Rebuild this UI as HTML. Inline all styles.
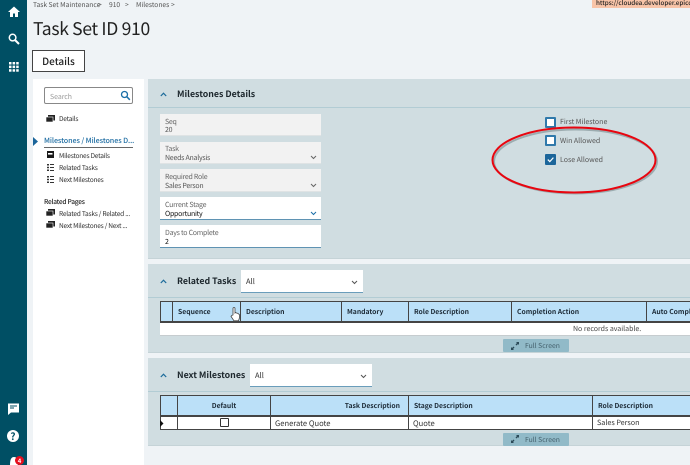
<!DOCTYPE html>
<html><head><meta charset="utf-8">
<style>
html,body{margin:0;padding:0}
body{width:690px;height:465px;overflow:hidden;position:relative;background:#eff3f6;font-family:"Noto Sans CJK SC","Liberation Sans",sans-serif;color:#333;text-rendering:geometricPrecision}
div,span{position:absolute;box-sizing:border-box}
.t{white-space:nowrap;line-height:12px;font-size:7px;color:#444}
.bc{top:-2px;font-size:6.7px;color:#555}
.s{font-size:6.6px;letter-spacing:-.25px;color:#333}
.sec{left:148px;width:542px;background:#d0dde1;border-bottom:1px solid #c5d3d7}
.hl{left:148px;width:542px;height:1px;background:#b2ccd4}
.h{font-size:8.8px;font-weight:700;color:#1c262c;white-space:nowrap;line-height:14px}
.f{left:160px;width:161px;background:#f2f2f2;border-bottom:1px solid #dfe3e4}
.f.w{background:#fff;border-bottom:1px solid #5f93b3}
.l{left:5px;top:2px;font-size:7px;letter-spacing:-.25px;line-height:12px;color:#666;white-space:nowrap}
.v{left:5px;top:11px;font-size:7px;letter-spacing:-.25px;line-height:12px;color:#555;white-space:nowrap}
.w .v{color:#111}
.th{background:#bbe0f8;border:1px solid #444;border-width:1px 1px 2px 0;font-size:6.8px;font-weight:700;color:#1c2a36;line-height:19px;white-space:nowrap;overflow:hidden;padding-left:5px}
.td{background:#fff;border-bottom:1px solid #444;border-right:1px solid #444;font-size:7px;color:#333;line-height:13px;white-space:nowrap;overflow:hidden;padding-left:4px}
.dd{background:#fff;border-bottom:1px solid #6a9dbb;height:23px;font-size:7.5px;color:#333;line-height:23px;padding-left:5px}
.fs{left:503px;width:66px;height:13px;background:#91bac8;font-size:6.8px;color:#44606c;line-height:13px;padding-left:22px;white-space:nowrap;border-radius:1px}
.cb{width:11px;height:11px;background:#fff;border:2px solid #3079ab;border-radius:1px}
svg{position:absolute;overflow:visible}
</style></head><body>

<div style="left:0;top:0;width:27px;height:465px;background:#004f64"></div>
<svg style="left:7px;top:5px" width="14" height="14" viewBox="0 0 14 14"><path d="M7 1.500L1 7h2v5h3V8.500h2V12h3V7h2z" fill="#fff"/></svg>
<svg style="left:7px;top:32px" width="14" height="14" viewBox="0 0 14 14"><circle cx="5.600" cy="5.600" r="3.300" fill="none" stroke="#fff" stroke-width="1.500"/><path d="M8 8l4 4" stroke="#fff" stroke-width="2"/></svg>
<svg style="left:9px;top:62px" width="10" height="10" viewBox="0 0 10 10" fill="#fff"><rect x="0" y="0" width="2.500" height="2.500"/><rect x="3.600" y="0" width="2.500" height="2.500"/><rect x="7.200" y="0" width="2.500" height="2.500"/><rect x="0" y="3.600" width="2.500" height="2.500"/><rect x="3.600" y="3.600" width="2.500" height="2.500"/><rect x="7.200" y="3.600" width="2.500" height="2.500"/><rect x="0" y="7.200" width="2.500" height="2.500"/><rect x="3.600" y="7.200" width="2.500" height="2.500"/><rect x="7.200" y="7.200" width="2.500" height="2.500"/></svg>
<svg style="left:7px;top:403px" width="13" height="13" viewBox="0 0 13 13"><path d="M1 .5h11v9H4l-3 2.500z" fill="#fff"/><path d="M3 3h7M3 5h4" stroke="#004f64" stroke-width="1"/></svg>
<div style="left:7px;top:430px;width:12px;height:12px;border-radius:50%;background:#fff;color:#004f64;font-size:10px;font-weight:700;line-height:12px;text-align:center">?</div>
<svg style="left:8px;top:457px" width="12" height="8" viewBox="0 0 12 8"><path d="M6 0c3 0 4 3 4 8H2c0-5 1-8 4-8z" fill="#fff"/></svg>
<div style="left:15px;top:456px;width:9px;height:9px;border-radius:50%;background:#e5101f;color:#fff;font-size:6px;font-weight:700;line-height:9px;text-align:center">4</div>

<div class="t bc" style="left:33px">Task Set Maintenance</div>
<div class="t bc" style="left:98px">&gt;</div>
<div class="t bc" style="left:109px">910</div>
<div class="t bc" style="left:125px">&gt;</div>
<div class="t bc" style="left:136px">Milestones</div>
<div class="t bc" style="left:171px">&gt;</div>
<div style="left:592px;top:0;width:98px;height:8px;background:#f8c4a8;overflow:hidden"><div class="t" style="left:4px;top:-3px;font-size:6.3px;font-weight:500;color:#222">https://cloudea.developer.epicor.com</div></div>

<div style="left:33px;top:15px;font-size:17.5px;letter-spacing:-.3px;line-height:28px;color:#222;white-space:nowrap">Task Set ID 910</div>
<div style="left:32px;top:50px;width:53px;height:22px;background:#fff;border:1px solid #444;border-bottom-width:1.500px;font-size:10px;font-weight:500;line-height:20px;text-align:center;color:#222">Details</div>

<div style="left:33px;top:79px;width:111px;height:386px;background:#fff"></div>
<div style="left:44px;top:87px;width:89px;height:17px;background:#fff;border:1px solid #888;border-radius:2px"></div>
<div class="t" style="left:50px;top:90px;font-size:6.9px;color:#999">Search</div>
<svg style="left:120px;top:90px" width="11" height="11" viewBox="0 0 11 11"><circle cx="4.500" cy="4.500" r="3" fill="none" stroke="#1b6fa8" stroke-width="1.300"/><path d="M6.800 6.800l3 3" stroke="#1b6fa8" stroke-width="1.500"/></svg>

<svg style="left:46px;top:115px" width="9" height="8" viewBox="0 0 9 8"><rect x="2" y="0" width="7" height="5.500" fill="#222"/><rect x="0" y="2" width="7" height="5" fill="#222" stroke="#fff" stroke-width=".6"/></svg>
<div class="t s" style="left:59px;top:112px">Details</div>
<svg style="left:33px;top:137px" width="5" height="9" viewBox="0 0 5 9"><path d="M0 0l5 4.500L0 9z" fill="#1b659a"/></svg>
<div class="t" style="left:44px;top:135px;font-size:7.2px;letter-spacing:-.08px;font-weight:500;color:#1d6ca2">Milestones / Milestones D...</div>
<div style="left:44px;top:147px;width:89px;height:1px;background:#666"></div>
<svg style="left:47px;top:151px" width="7" height="7" viewBox="0 0 7 7"><rect width="7" height="7" fill="#1a1a1a"/><rect x="1" y="2" width="4.500" height="1.600" fill="#fff"/></svg>
<div class="t s" style="left:59px;top:149px">Milestones Details</div>
<svg style="left:47px;top:164px" width="7" height="7" viewBox="0 0 7 7" fill="#333"><path d="M0 0h2v1.500H0zM3 0h4v1H3zM0 2.700h2v1.500H0zM3 3h4v1H3zM0 5.500h2V7H0zM3 6h4v1H3z"/></svg>
<div class="t s" style="left:59px;top:161px">Related Tasks</div>
<svg style="left:47px;top:176px" width="7" height="7" viewBox="0 0 7 7" fill="#333"><path d="M0 0h2v1.500H0zM3 0h4v1H3zM0 2.700h2v1.500H0zM3 3h4v1H3zM0 5.500h2V7H0zM3 6h4v1H3z"/></svg>
<div class="t s" style="left:59px;top:173px">Next Milestones</div>
<div class="t s" style="left:44px;top:195px;font-weight:500;color:#222">Related Pages</div>
<svg style="left:46px;top:209px" width="9" height="8" viewBox="0 0 9 8"><rect x="2" y="0" width="7" height="5.500" fill="#222"/><rect x="0" y="2" width="7" height="5" fill="#222" stroke="#fff" stroke-width=".6"/></svg>
<div class="t s" style="left:59px;top:207px">Related Tasks / Related ...</div>
<svg style="left:46px;top:221px" width="9" height="8" viewBox="0 0 9 8"><rect x="2" y="0" width="7" height="5.500" fill="#222"/><rect x="0" y="2" width="7" height="5" fill="#222" stroke="#fff" stroke-width=".6"/></svg>
<div class="t s" style="left:59px;top:219px">Next Milestones / Next ...</div>

<!-- Section 1 -->
<div class="sec" style="top:79px;height:180px"></div>
<div class="hl" style="top:107px"></div>
<svg style="left:160px;top:92px" width="7" height="5" viewBox="0 0 7 5"><path d="M.8 4L3.500 1.200 6.200 4" fill="none" stroke="#1b6a9a" stroke-width="1.200"/></svg>
<div class="h" style="left:177px;top:87px">Milestones Details</div>

<div class="f" style="top:114px;height:22px"><div class="l">Seq</div><div class="v" style="top:10px">20</div></div>
<div class="f" style="top:142px;height:22px"><div class="l" style="top:1px">Task</div><div class="v" style="top:10px">Needs Analysis</div></div>
<div class="f" style="top:169px;height:23px"><div class="l">Required Role</div><div class="v">Sales Person</div></div>
<div class="f w" style="top:197px;height:23px"><div class="l">Current Stage</div><div class="v">Opportunity</div></div>
<div class="f w" style="top:225px;height:23px"><div class="l">Days to Complete</div><div class="v">2</div></div>
<svg style="left:310px;top:155px" width="7" height="5" viewBox="0 0 7 5"><path d="M1 1l2.500 2.500L6 1" fill="none" stroke="#666" stroke-width="1"/></svg>
<svg style="left:310px;top:183px" width="7" height="5" viewBox="0 0 7 5"><path d="M1 1l2.500 2.500L6 1" fill="none" stroke="#666" stroke-width="1"/></svg>
<svg style="left:310px;top:211px" width="7" height="5" viewBox="0 0 7 5"><path d="M1 1l2.500 2.500L6 1" fill="none" stroke="#1b6fa8" stroke-width="1"/></svg>

<div class="cb" style="left:545px;top:117px"></div>
<div class="t" style="left:560px;top:116px;color:#555">First Milestone</div>
<div class="cb" style="left:545px;top:135px"></div>
<div class="t" style="left:560px;top:135px;color:#555">Win Allowed</div>
<div class="cb" style="left:545px;top:154px;background:#1b659a;border-color:#1b659a"></div>
<svg style="left:545px;top:154px" width="11" height="11" viewBox="0 0 11 11"><path d="M2.800 5.600l2 2 3.600-4" fill="none" stroke="#fff" stroke-width="1.200"/></svg>
<div class="t" style="left:560px;top:154px;color:#555">Lose Allowed</div>

<svg style="left:0;top:0" width="690" height="465"><ellipse cx="574" cy="160" rx="81.500" ry="32" fill="none" stroke="#7a8c90" stroke-width="2" opacity=".6" transform="translate(1.500 1.500)"/><ellipse cx="574" cy="160" rx="81.500" ry="32.500" fill="none" stroke="#e8050f" stroke-width="2"/></svg>

<!-- Section 2 -->
<div class="sec" style="top:264px;height:89px"></div>
<div class="hl" style="top:297px"></div>
<svg style="left:160px;top:279px" width="7" height="5" viewBox="0 0 7 5"><path d="M.8 4L3.500 1.200 6.200 4" fill="none" stroke="#1b6a9a" stroke-width="1.200"/></svg>
<div class="h" style="left:177px;top:274px">Related Tasks</div>
<div class="dd" style="left:241px;top:270px;width:122px">All</div>
<svg style="left:351px;top:280px" width="7" height="5" viewBox="0 0 7 5"><path d="M1 1l2.500 2.500L6 1" fill="none" stroke="#555" stroke-width="1"/></svg>

<div class="th" style="left:160px;top:301px;width:13px;height:22px;border-left-width:1px"></div>
<div class="th" style="left:173px;top:301px;width:68px;height:22px">Sequence</div>
<div class="th" style="left:241px;top:301px;width:101px;height:22px">Description</div>
<div class="th" style="left:342px;top:301px;width:67px;height:22px">Mandatory</div>
<div class="th" style="left:409px;top:301px;width:103px;height:22px">Role Description</div>
<div class="th" style="left:512px;top:301px;width:135px;height:22px">Completion Action</div>
<div class="th" style="left:647px;top:301px;width:43px;height:22px;border-right:0">Auto Completion</div>
<div style="left:160px;top:323px;width:530px;height:13px;background:#fff;border-bottom:1px solid #c6cccf"></div>
<div class="t" style="left:573px;top:323px;color:#444">No records available.</div>
<svg style="left:230px;top:306px" width="11" height="17" viewBox="0 0 11 17"><path d="M3 9V2.500a1 1 0 012 0V7l.5-.5 1 .5 1 .3 1 .5 1 1v3l-1 3H4l-3-4.500 1-1z" fill="#fff" stroke="#444" stroke-width=".8"/></svg>
<div class="fs" style="top:339px">Full Screen</div>
<svg style="left:511px;top:342px" width="8" height="8" viewBox="0 0 8 8"><path d="M0 8V5l1 1 1.500-1.500 1 1L2 7l1 1zM8 0v3L7 2 5.500 3.500l-1-1L6 1 5 0z" fill="#2b4a58"/></svg>

<!-- Section 3 -->
<div class="sec" style="top:358px;height:88px"></div>
<div class="hl" style="top:391px"></div>
<svg style="left:160px;top:373px" width="7" height="5" viewBox="0 0 7 5"><path d="M.8 4L3.500 1.200 6.200 4" fill="none" stroke="#1b6a9a" stroke-width="1.200"/></svg>
<div class="h" style="left:177px;top:368px">Next Milestones</div>
<div class="dd" style="left:250px;top:364px;width:122px">All</div>
<svg style="left:360px;top:374px" width="7" height="5" viewBox="0 0 7 5"><path d="M1 1l2.500 2.500L6 1" fill="none" stroke="#555" stroke-width="1"/></svg>

<div class="th" style="left:160px;top:395px;width:18px;height:22px;border-left-width:1px"></div>
<div class="th" style="left:178px;top:395px;width:93px;height:22px;text-align:center;padding:0">Default</div>
<div class="th" style="left:271px;top:395px;width:138px;height:22px;text-align:right;padding:0 8px 0 0">Task Description</div>
<div class="th" style="left:409px;top:395px;width:184px;height:22px">Stage Description</div>
<div class="th" style="left:593px;top:395px;width:97px;height:22px;border-right:0">Role Description</div>

<div class="td" style="left:160px;top:417px;width:18px;height:13px;background:#fff;border-left:1px solid #444"></div>
<svg style="left:160px;top:420px" width="4" height="7" viewBox="0 0 4 7"><path d="M0 0l3.500 3.500L0 7z" fill="#111"/></svg>
<div class="td" style="left:178px;top:417px;width:93px;height:13px"></div>
<div style="left:220px;top:418px;width:9px;height:9px;border:1px solid #333;border-radius:1px;background:#fff"></div>
<div class="td" style="left:271px;top:417px;width:138px;height:13px;font-size:7.6px">Generate Quote</div>
<div class="td" style="left:409px;top:417px;width:184px;height:13px;font-size:7.6px">Quote</div>
<div class="td" style="left:593px;top:417px;width:97px;height:13px;border-right:0;font-size:7.2px">Sales Person</div>
<div class="fs" style="top:433px">Full Screen</div>
<svg style="left:511px;top:435px" width="8" height="8" viewBox="0 0 8 8"><path d="M0 8V5l1 1 1.500-1.500 1 1L2 7l1 1zM8 0v3L7 2 5.500 3.500l-1-1L6 1 5 0z" fill="#2b4a58"/></svg>

</body></html>
